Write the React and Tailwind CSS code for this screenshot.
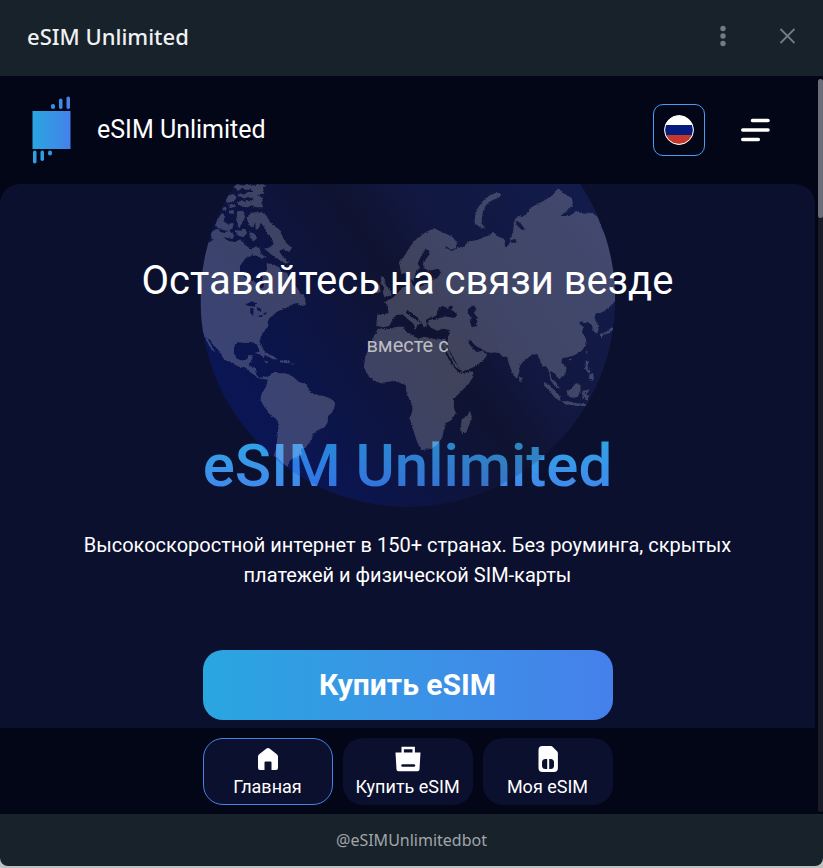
import React from "react";

const AMERICAS = [
  "M0 200L35 188L58 186L72 177L100 174L115 183L132 186L150 178L164 194L178 206L190 215L182 228L165 235L148 258L149 280L162 292L184 300L198 310L208 327L219 322L221 308L215 290L230 268L228 250L246 252L266 262L273 276L290 278L297 300L312 314L325 330L333 350L345 364L346 376L330 378L322 368L308 372L285 385L262 394L240 412L231 425L234 438L212 466L207 485L222 515L220 533L210 522L201 497L185 486L168 489L140 487L131 502L130 520L138 535L153 542L170 538L175 526L190 526L180 546L173 556L196 564L198 586L207 594L228 589L230 598L215 597L202 594L183 579L163 563L145 560L120 547L101 539L90 518L70 496L56 478L50 474L62 495L75 518L62 508L48 482L30 440L0 440Z",
  "M230 592L244 580L258 576L264 580L284 580L300 585L313 595L326 606L346 612L354 625L360 638L376 644L400 648L418 655L432 664L434 676L425 696L413 708L411 728L402 742L382 750L368 762L364 778L350 796L345 804L330 806L334 822L321 832L308 834L298 842L292 860L276 850L262 834L250 827L257 805L261 768L264 735L260 718L242 708L231 693L218 675L210 660L213 642L226 622L230 608Z",
  "M192 519L210 514L228 519L248 529L262 538L246 538L232 528L212 524Z",
  "M268 542L284 539L302 546L296 550L270 548Z",
  "M222 543L236 544L234 549L223 547ZM304 548L309 551L307 556Z",
  "M168 112L182 98L212 96L230 108L238 126L252 138L270 152L276 172L288 190L304 204L296 216L280 208L266 214L278 232L294 246L288 252L266 240L250 230L236 218L222 206L238 202L250 190L242 172L228 160L222 142L210 128L206 144L196 150L194 126L188 142L176 138Z",
  "M95 98L104 108L98 124L112 132L130 128L126 146L108 152L88 148L74 138L80 120ZM60 156L80 146L96 158L116 152L132 164L126 178L104 172L86 182L64 178Z",
  "M140 94L160 92L164 114L154 128L146 146L138 122ZM134 150L150 152L162 142L170 160L158 172L140 166ZM176 156L190 160L200 174L190 184L178 172Z",
  "M128 20L142 12L156 18L170 12L184 18L204 12L226 14L218 26L222 40L200 46L218 54L214 66L218 82L196 82L184 76L172 82L154 80L140 70L152 60L164 66L172 60L188 62L188 56L174 50L160 56L152 50L138 48L150 40L160 44L172 36L188 36L180 28L166 30L156 24L144 32Z",
  "M104 48L130 42L138 54L128 66L108 68ZM112 74L132 72L136 80L120 84ZM96 84L106 80L110 88L98 92ZM114 92L130 90L130 102L116 100Z",
  "M184 206L198 198L208 206L212 222L224 230L214 236L198 226L188 228Z",
  "M320 344L338 342L346 360L334 362L324 354Z",
];

const EURASIA_AFRICA = [
  "M626 246L640 230L656 204L670 184L688 170L706 156L732 145L746 152L762 160L784 168L800 188L796 205L780 208L766 198L764 202L784 214L798 204L820 200L834 184L860 180L880 172L896 166L908 156L924 170L940 176L948 196L958 176L968 158L970 124L982 108L996 110L1012 98L1022 82L1060 62L1086 46L1104 24L1118 40L1144 54L1148 76L1124 96L1110 108L1140 100L1160 92L1180 102L1206 98L1222 112L1232 140L1280 240L1280 354L1268 372L1250 386L1232 398L1216 400L1212 414L1226 438L1222 458L1210 456L1204 436L1192 426L1180 430L1172 424L1164 430L1180 442L1174 456L1186 474L1188 492L1174 512L1152 526L1132 532L1116 534L1112 546L1128 564L1124 584L1106 598L1094 582L1080 572L1082 594L1098 608L1108 626L1092 618L1080 600L1074 570L1066 558L1056 560L1050 542L1040 522L1022 526L1000 544L988 558L986 578L978 596L966 580L954 548L950 530L936 530L926 518L894 518L870 508L852 494L838 484L834 490L848 506L858 516L876 512L890 524L880 540L852 560L814 576L804 560L788 532L774 506L770 492L774 468L778 450L760 446L740 452L722 444L710 430L716 418L730 420L760 410L796 410L798 400L780 388L786 378L770 384L756 378L742 388L738 408L720 412L706 420L710 438L700 442L690 426L680 412L664 398L650 390L646 398L664 412L692 430L680 434L676 450L668 430L652 418L638 404L618 404L606 420L596 438L578 442L558 438L560 404L594 400L592 378L580 366L606 354L624 336L636 322L654 318L652 300L660 298L668 318L690 320L710 310L728 300L742 292L752 278L744 266L716 272L700 264L698 248L716 224L716 212L704 206L690 232L682 250L688 262L676 280L668 302L656 294L650 278L632 282Z",
  "M562 446L592 448L622 440L640 440L644 452L664 464L684 476L700 470L736 478L764 476L774 510L790 542L808 566L814 580L848 574L848 590L834 612L808 638L790 656L790 680L796 700L780 722L768 728L760 748L756 772L738 796L718 808L694 810L682 792L672 762L658 716L666 690L662 668L648 642L646 616L632 610L610 602L570 610L548 600L532 584L520 562L524 532L532 512L546 476Z",
  "M838 692L844 710L836 734L828 756L814 760L810 744L814 718L830 708Z",
  "M572 288L584 294L582 312L596 326L604 346L582 352L576 336L582 324L572 310ZM554 318L568 316L570 336L556 340Z",
  "M924 36L932 44L924 54L902 62L888 74L878 92L874 114L874 128L884 146L868 142L852 128L854 106L862 84L878 62L898 46Z",
  "M986 588L996 594L994 606L986 604Z",
  "M1060 606L1076 614L1094 632L1108 648L1110 664L1094 654L1076 632L1062 618ZM1112 664L1134 664L1158 670L1186 672L1190 678L1160 678L1124 672Z",
  "M1128 632L1144 624L1156 610L1170 616L1170 632L1162 650L1146 654L1132 648Z",
  "M1176 632L1196 630L1192 638L1182 640L1196 648L1190 664L1182 650L1176 660Z",
  "M1186 540L1194 546L1190 564L1202 576L1194 580L1184 566ZM1196 584L1208 578L1210 600L1196 598Z",
  "M1264 442L1270 448L1256 460L1238 464L1232 474L1228 462L1246 456Z",
  "M1186 516L1190 510L1190 524ZM1134 538L1144 536L1140 544Z",
];

const INLAND_WATER = [
  "M164 374L182 364L198 370L192 380L176 378ZM178 384L190 386L188 408L180 400ZM194 382L212 384L212 396L202 390ZM198 410L218 404L214 411ZM218 400L232 396L222 405Z",
  "M736 408L744 388L756 378L772 386L782 376L788 382L780 390L800 408L790 414L760 408Z",
  "M832 386L850 376L858 386L850 398L860 412L860 438L844 442L838 424L844 412L832 402Z",
  "M938 112L948 124L950 160L960 184L948 202L942 194L946 176L938 150Z",
  "M976 120L990 130L1004 148L994 150L978 134ZM960 180L976 178L978 188L962 188Z",
  "M1140 88L1150 80L1152 98L1136 108L1110 108Z",
  "M832 480L842 482L856 500L876 506L868 514L852 508Z",
  "M752 492L762 506L778 530L794 560L812 572L808 580L792 564L776 540L764 518Z",
];

function Globe() {
  return (
    <svg
      aria-hidden="true"
      viewBox="30 12 1245 969"
      className="pointer-events-none absolute top-0 left-1/2 w-[415px] -translate-x-1/2"
    >
      <defs>
        <linearGradient id="ocean" x1="0.1" y1="0.72" x2="0.85" y2="0.2">
          <stop offset="0" stopColor="#0528d4" />
          <stop offset="0.5" stopColor="#1c2038" />
          <stop offset="0.66" stopColor="#22317c" />
          <stop offset="1" stopColor="#2a41a8" />
        </linearGradient>
        <clipPath id="disc">
          <circle cx="652" cy="358" r="622" />
        </clipPath>
        <filter id="coast" x="-5%" y="-5%" width="110%" height="110%">
          <feTurbulence type="fractalNoise" baseFrequency="0.25" numOctaves="3" seed="4" />
          <feDisplacementMap in="SourceGraphic" scale="8" xChannelSelector="R" yChannelSelector="G" />
        </filter>
        <mask id="lakes" maskUnits="userSpaceOnUse" x="0" y="0" width="1300" height="1000">
          <rect width="1300" height="1000" fill="white" />
          <path d={INLAND_WATER.join("")} fill="black" />
        </mask>
      </defs>
      <circle cx="652" cy="358" r="622" fill="url(#ocean)" opacity="0.22" />
      <g clipPath="url(#disc)" opacity="0.2">
        <g filter="url(#coast)">
          <g mask="url(#lakes)" fill="white">
            {[...AMERICAS, ...EURASIA_AFRICA].map((d) => (
              <path key={d} d={d} />
            ))}
          </g>
        </g>
      </g>
    </svg>
  );
}

function Logo() {
  return (
    <svg aria-hidden="true" width="39" height="68" viewBox="0 0 39 68">
      <defs>
        <linearGradient id="logo" gradientUnits="userSpaceOnUse" x1="0" y1="0" x2="39" y2="0">
          <stop stopColor="#29a6e0" />
          <stop offset="1" stopColor="#4580ea" />
        </linearGradient>
      </defs>
      <g fill="url(#logo)">
        <rect x="0.5" y="15" width="38" height="38" />
        <rect x="19" y="8" width="4" height="5" rx="2" />
        <rect x="27" y="2.500" width="3.500" height="10.500" rx="1.700" />
        <rect x="34.500" y="0.500" width="3.500" height="12.500" rx="1.700" />
        <rect x="1" y="54.500" width="3.500" height="13" rx="1.700" />
        <rect x="8.500" y="54.500" width="3.500" height="10.500" rx="1.700" />
        <rect x="16" y="54.500" width="4" height="5" rx="2" />
      </g>
    </svg>
  );
}

function HomeIcon() {
  return (
    <svg aria-hidden="true" width="28" height="28" viewBox="0 0 28 28" fill="white">
      <path d="M14 3q.8 0 1.500.6l7.300 5.600Q24 10.100 24 11.500V23q0 2-2 2h-4.500v-7.500q0-1-1-1h-5q-1 0-1 1V25H6q-2 0-2-2V11.500q0-1.400 1.200-2.300l7.300-5.600Q13.200 3 14 3Z" />
    </svg>
  );
}

function BagIcon() {
  return (
    <svg aria-hidden="true" width="28" height="28" viewBox="0 0 28 28">
      <path d="M8.700 9V3h11V9" fill="none" stroke="white" strokeWidth="2.400" />
      <path d="M1.500 7.500h25l-1 17q-.1 1.700-1.800 1.700H4.300q-1.700 0-1.800-1.700Z" fill="white" />
      <path d="M8.500 20.500h11.500" stroke="#0c102f" strokeWidth="2.400" strokeLinecap="round" />
    </svg>
  );
}

function SimIcon() {
  return (
    <svg aria-hidden="true" width="28" height="28" viewBox="0 0 28 28">
      <path d="M8.500 1h8.300q1.200 0 2 .9l4.200 4.300q.9.900.9 2.100V23q0 4-4 4H8.500q-4 0-4-4V5q0-4 4-4Z" fill="white" />
      <path d="M13.200 14v10h-1.700Q8 24 8 20.500v-3Q8 14 11.500 14ZM15.200 14h1.300q3.500 0 3.500 3.500v3q0 3.500-3.500 3.500h-1.300Z" fill="#0c102f" />
    </svg>
  );
}

const NAV = [
  { label: "Главная", Icon: HomeIcon, border: "border-[#4583e8]" },
  { label: "Купить eSIM", Icon: BagIcon, border: "border-transparent" },
  { label: "Моя eSIM", Icon: SimIcon, border: "border-transparent" },
];

export default function App() {
  return (
    <div className="flex min-h-screen flex-col bg-[#bfc1c1] pb-0.5 font-[Roboto,sans-serif] text-white">
      <div className="flex grow flex-col overflow-hidden rounded-b-lg bg-[#18222b]">
        <header className="flex h-[76px] items-center justify-between pr-6 pb-1 pl-[27px] font-['Noto_Sans',sans-serif]">
          <h2 className="text-[22px] font-medium text-[#f0f1f2]">eSIM Unlimited</h2>
          <div className="flex items-center gap-10">
            <button type="button" aria-label="Меню" className="flex h-6 w-6 items-center justify-center">
              <svg width="6" height="22" viewBox="0 0 6 22" fill="#737c83">
                <circle cx="3" cy="3.500" r="2.700" />
                <circle cx="3" cy="11" r="2.700" />
                <circle cx="3" cy="18.500" r="2.700" />
              </svg>
            </button>
            <button type="button" aria-label="Закрыть" className="flex h-6 w-6 items-center justify-center">
              <svg width="16" height="16" viewBox="0 0 16 16" stroke="#737c83" strokeWidth="1.900">
                <path d="M1.500 1l14 14M15.500 1L1.500 15" />
              </svg>
            </button>
          </div>
        </header>

        <div className="flex grow bg-[#030617]">
          <main className="flex min-w-0 grow flex-col">
            <div className="flex h-[108px] items-center pr-[45px] pl-8">
              <Logo />
              <h1 className="ml-[26px] grow text-[25px]">eSIM Unlimited</h1>
              <button
                type="button"
                aria-label="Русский"
                className="flex size-[52px] items-center justify-center rounded-[10px] border border-[#4c9bf5]"
              >
                <svg width="30" height="30" viewBox="0 0 30 30">
                  <clipPath id="flag">
                    <circle cx="15" cy="15" r="14.500" />
                  </clipPath>
                  <g clipPath="url(#flag)">
                    <rect width="30" height="30" fill="white" />
                    <rect y="10" width="30" height="10" fill="#051b7d" />
                    <rect y="20" width="30" height="10" fill="#c4382c" />
                  </g>
                  <circle cx="15" cy="15" r="14.400" fill="none" stroke="white" />
                </svg>
              </button>
              <button type="button" aria-label="Навигация" className="ml-9 flex h-6 w-[29px] items-center">
                <svg width="29" height="24" viewBox="0 0 29 24" stroke="white" strokeWidth="3.600" strokeLinecap="round">
                  <path d="M11.500 2.500h15.500M1.800 12h25.200M1.800 21.500h15.500" />
                </svg>
              </button>
            </div>

            <section className="relative flex grow flex-col items-center overflow-hidden rounded-t-[20px] bg-[#0c102f] px-5 pt-[73px] pb-2 text-center">
              <h2 className="relative z-10 text-[40px] leading-[48px]">Оставайтесь на связи везде</h2>
              <p className="relative z-10 mt-[25px] text-xl leading-[30px] text-[#bcbcc3]">вместе с</p>
              <p className="mt-[70px] bg-linear-to-b from-[#2ca6e4] from-10% to-[#4480ee] to-100% bg-clip-text text-[60px] leading-[72px] font-medium text-transparent">
                eSIM Unlimited
              </p>
              <p className="relative z-10 mt-7 max-w-[680px] text-xl leading-[30px]">
                Высокоскоростной интернет в 150+ странах. Без роуминга, скрытых платежей и физической SIM-карты
              </p>
              <button
                type="button"
                className="relative z-10 mt-[60px] h-[70px] w-full max-w-[410px] rounded-[20px] bg-linear-to-r from-[#29a6e0] to-[#4580eb] pb-0.5 text-[30px] font-bold"
              >
                Купить eSIM
              </button>
              <Globe />
            </section>

            <nav className="flex h-[86px] justify-center gap-2.5 pt-2.5">
              {NAV.map(({ label, Icon, border }) => (
                <button
                  key={label}
                  type="button"
                  className={`flex h-[67px] w-[130px] flex-col items-center rounded-[20px] border bg-[#0c102f] pt-1.5 text-lg leading-7 ${border}`}
                >
                  <Icon />
                  {label}
                </button>
              ))}
            </nav>
          </main>
          <div className="flex w-2 shrink-0 flex-col pt-[3px] pb-0.5 pl-[3px]">
            <div className="grow rounded-sm bg-[#1a1b28]">
              <div className="h-[139px] rounded-sm bg-[#6b6d78]" />
            </div>
          </div>
        </div>

        <footer className="flex h-[52px] items-center justify-center font-['Noto_Sans',sans-serif] text-base text-[#a0a5a9]">
          @eSIMUnlimitedbot
        </footer>
      </div>
    </div>
  );
}
